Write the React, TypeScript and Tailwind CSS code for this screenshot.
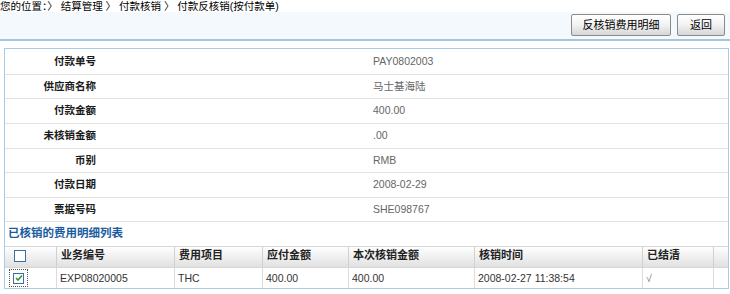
import React from 'react';

const fields: { label: string; value: string; h: string }[] = [
  { label: '付款单号', value: 'PAY0802003', h: 'h-[26px]' },
  { label: '供应商名称', value: '马士基海陆', h: 'h-[24px]' },
  { label: '付款金额', value: '400.00', h: 'h-[25px]' },
  { label: '未核销金额', value: '.00', h: 'h-[25px]' },
  { label: '币别', value: 'RMB', h: 'h-[24px]' },
  { label: '付款日期', value: '2008-02-29', h: 'h-[25px]' },
  { label: '票据号码', value: 'SHE098767', h: 'h-[24px]' },
];

const cols = [
  { title: '业务编号', w: 'w-[118px]' },
  { title: '费用项目', w: 'w-[88px]' },
  { title: '应付金额', w: 'w-[86px]' },
  { title: '本次核销金额', w: 'w-[126px]' },
  { title: '核销时间', w: 'w-[168px]' },
  { title: '已结清', w: 'w-[71px]' },
];

const row = ['EXP08020005', 'THC', '400.00', '400.00', '2008-02-27 11:38:54', '√'];

const Btn: React.FC<{ children: React.ReactNode; w: string }> = ({ children, w }) => (
  <button
    className={`${w} h-[22px] border border-[#8a8a8a] rounded-[2px] bg-gradient-to-b from-white via-[#f2f2f2] to-[#d6d6d6] text-[11px] text-black leading-none`}
  >
    {children}
  </button>
);

const App: React.FC = () => {
  return (
    <div className="w-[730px] h-[294px] overflow-hidden bg-white text-[#333] font-['Liberation_Sans','Noto_Sans_CJK_SC',sans-serif]">
      {/* breadcrumb */}
      <div className="h-[12px] text-[10.5px] leading-[12px] text-black whitespace-pre">
        您的位置：〉 结算管理 〉 付款核销 〉 付款反核销(按付款单)
      </div>

      {/* toolbar */}
      <div className="h-[27px] bg-[#f3f9fd] flex justify-end items-start pt-[2px] pr-[5px] gap-[6px]">
        <Btn w="w-[100px]">反核销费用明细</Btn>
        <Btn w="w-[48px]">返回</Btn>
      </div>
      <div className="h-[2px] bg-[#a3c6e0]" />

      {/* panel */}
      <div className="mt-[7px] ml-[4px] w-[725px] border border-[#a9cbe5]">
        {fields.map(f => (
          <div key={f.label} className={`${f.h} flex items-center border-b border-[#e2e2e2] text-[10.5px]`}>
            <div className="w-[91px] text-right font-bold text-[#1a1a1a]">{f.label}</div>
            <div className="ml-[277px] text-[#666]">{f.value}</div>
          </div>
        ))}

        <div className="h-[24px] flex items-center pl-[3px] text-[11.5px] font-bold text-[#1b5c9e]">
          已核销的费用明细列表
        </div>

        {/* table header */}
        <div className="flex h-[22px] bg-gradient-to-b from-white to-[#e1e1e1] border-y border-[#d6d6d6] text-[11px] font-bold text-[#222] leading-[16px]">
          <div className="w-[52px] border-r border-[#d0d0d0] pl-[9px] pt-[3px]">
            <div className="w-[12px] h-[12px] border border-[#3a6ea5] bg-white" />
          </div>
          {cols.map(c => (
            <div key={c.title} className={`${c.w} border-r border-[#d0d0d0] pl-[4px]`}>
              {c.title}
            </div>
          ))}
          <div className="flex-1" />
        </div>

        {/* data row */}
        <div className="flex h-[20px] text-[10.5px] leading-[20px] text-[#333]">
          <div className="w-[52px] border-r border-[#dcdcdc] pl-[4px] pt-[1px]">
            <div className="w-[19px] h-[18px] border border-dotted border-[#555] flex items-center justify-center">
              <div className="w-[11px] h-[11px] border border-[#3a6ea5] bg-white flex items-center justify-center">
                <svg width="8" height="8" viewBox="0 0 8 8">
                  <path d="M1 4 L3 6 L7 1.5" stroke="#2e9a2e" strokeWidth="1.6" fill="none" />
                </svg>
              </div>
            </div>
          </div>
          {cols.map((c, i) => (
            <div key={c.title} className={`${c.w} border-r border-[#dcdcdc] pl-[3px] ${i === 5 ? 'text-[#777]' : ''}`}>
              {row[i]}
            </div>
          ))}
          <div className="flex-1" />
        </div>
      </div>
    </div>
  );
};

export default App;
